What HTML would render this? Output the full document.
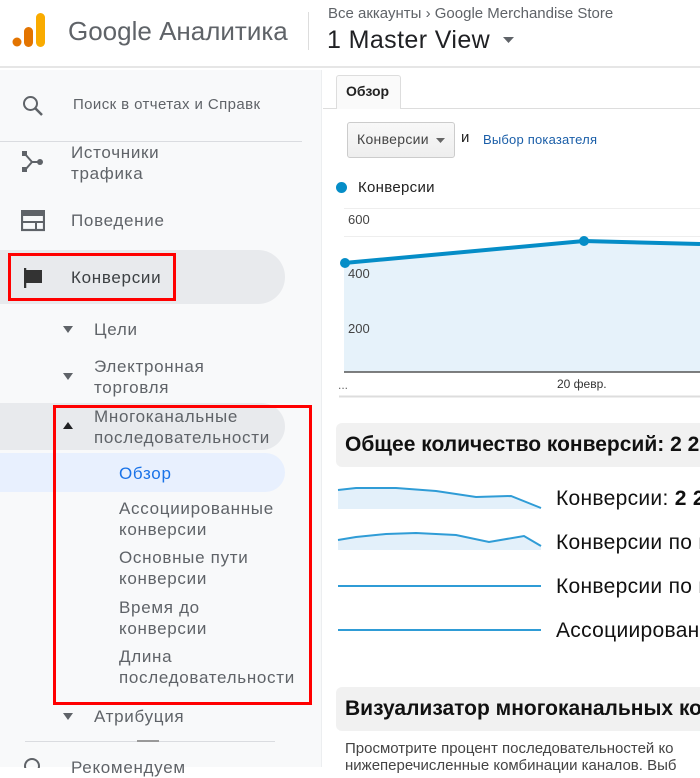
<!DOCTYPE html>
<html><head><meta charset="utf-8"><style>
*{margin:0;padding:0;box-sizing:border-box}
body{width:700px;height:767px;overflow:hidden;background:#fff;font-family:"Liberation Sans","DejaVu Sans",sans-serif;position:relative}
.a{position:absolute;white-space:nowrap}
.nav{font-size:17px;letter-spacing:0.7px;color:#5f6368;line-height:21px}
</style></head><body>
<!-- header -->
<div class="a" style="left:0;top:0;width:700px;height:68px;background:#fff;border-bottom:2px solid #e6e6e6"></div>
<svg class="a" style="left:10px;top:12px" width="36" height="38">
<circle cx="7" cy="30" r="4.5" fill="#e37400"/>
<rect x="14" y="15" width="9" height="20" rx="4.5" fill="#e37400"/>
<rect x="26" y="1" width="9" height="34" rx="4.5" fill="#f9ab00"/>
</svg>
<div class="a" style="left:68px;top:16px;font-size:26px;color:#5f6368">Google Аналитика</div>
<div class="a" style="left:308px;top:12px;width:1px;height:38px;background:#ddd"></div>
<div class="a" style="left:328px;top:5px;font-size:15px;color:#5f6368">Все аккаунты › Google Merchandise Store</div>
<div class="a" style="left:327px;top:26px;font-size:25px;letter-spacing:0.4px;color:#202124">1 Master View</div>
<svg class="a" style="left:503px;top:37px" width="12" height="7"><path d="M0 0H11L5.5 6Z" fill="#5f6368"/></svg>

<!-- sidebar -->
<div class="a" style="left:0;top:70px;width:322px;height:697px;background:#f8f9fa;border-right:1px solid #eceef0"></div>
<svg class="a" style="left:21px;top:94px" width="24" height="24"><circle cx="9.5" cy="9.5" r="6.5" fill="none" stroke="#5f6368" stroke-width="2"/><path d="M14.5 14.5L21 21" stroke="#5f6368" stroke-width="2.5"/></svg>
<div class="a" style="left:73px;top:96px;font-size:15px;letter-spacing:0.4px;color:#5f6368">Поиск в отчетах и Справк</div>
<div class="a" style="left:0;top:141px;width:302px;height:1px;background:#dadce0"></div>

<svg class="a" style="left:21px;top:150px" width="24" height="24"><rect x="1" y="1" width="5" height="5" fill="#5f6368"/><rect x="1" y="17" width="5" height="5" fill="#5f6368"/><circle cx="19" cy="12" r="3" fill="#5f6368"/><path d="M4 4L11 12L4 20M11 12H18" stroke="#5f6368" stroke-width="2" fill="none"/></svg>
<div class="a nav" style="left:71px;top:142px">Источники<br>трафика</div>

<svg class="a" style="left:21px;top:210px" width="24" height="22"><rect x="1" y="1" width="22" height="19" fill="none" stroke="#5f6368" stroke-width="2.2"/><rect x="1" y="1" width="22" height="5" fill="#5f6368"/><path d="M1 12H23M15 12V20" stroke="#5f6368" stroke-width="2"/></svg>
<div class="a nav" style="left:71px;top:210px">Поведение</div>

<div class="a" style="left:0;top:250px;width:285px;height:54px;background:#e8eaed;border-radius:0 27px 27px 0"></div>
<svg class="a" style="left:24px;top:268px" width="20" height="20"><path d="M1 0V20" stroke="#333" stroke-width="2.5"/><path d="M2 2H18V15H2Z" fill="#333"/></svg>
<div class="a nav" style="left:71px;top:267px;color:#3c4043">Конверсии</div>
<div class="a" style="left:8px;top:253px;width:168px;height:48px;border:3px solid #f00"></div>

<svg class="a" style="left:63px;top:326px" width="11" height="8"><path d="M0 0H10L5 7Z" fill="#5f6368"/></svg>
<div class="a nav" style="left:94px;top:319px">Цели</div>
<svg class="a" style="left:63px;top:373px" width="11" height="8"><path d="M0 0H10L5 7Z" fill="#5f6368"/></svg>
<div class="a nav" style="left:94px;top:356px">Электронная<br>торговля</div>

<div class="a" style="left:0;top:403px;width:285px;height:47px;background:#e8eaed;border-radius:0 24px 24px 0"></div>
<svg class="a" style="left:63px;top:422px" width="11" height="8"><path d="M0 7H10L5 0Z" fill="#202124"/></svg>
<div class="a nav" style="left:94px;top:406px">Многоканальные<br>последовательности</div>
<div class="a" style="left:0;top:453px;width:285px;height:39px;background:#e8f0fe;border-radius:0 20px 20px 0"></div>
<div class="a nav" style="left:119px;top:463px;color:#1a73e8">Обзор</div>
<div class="a nav" style="left:119px;top:498px">Ассоциированные<br>конверсии</div>
<div class="a nav" style="left:119px;top:547px">Основные пути<br>конверсии</div>
<div class="a nav" style="left:119px;top:597px">Время до<br>конверсии</div>
<div class="a nav" style="left:119px;top:646px">Длина<br>последовательности</div>
<div class="a" style="left:53px;top:405px;width:259px;height:300px;border:3px solid #f00"></div>
<svg class="a" style="left:63px;top:713px" width="11" height="8"><path d="M0 0H10L5 7Z" fill="#5f6368"/></svg>
<div class="a nav" style="left:94px;top:706px">Атрибуция</div>
<div class="a" style="left:25px;top:741px;width:250px;height:1px;background:#dadce0"></div>
<div class="a" style="left:137px;top:740px;width:22px;height:2px;background:#999"></div>
<svg class="a" style="left:22px;top:756px" width="22" height="12"><circle cx="10" cy="10" r="7" fill="none" stroke="#5f6368" stroke-width="2"/></svg>
<div class="a nav" style="left:71px;top:757px">Рекомендуем</div>

<!-- main -->
<div class="a" style="left:323px;top:108px;width:377px;height:1px;background:#ddd"></div>
<div class="a" style="left:336px;top:75px;width:65px;height:34px;background:#fafafa;border:1px solid #ddd;border-bottom:none;border-radius:3px 3px 0 0"></div>
<div class="a" style="left:346px;top:83px;font-size:14px;font-weight:bold;color:#222">Обзор</div>
<div class="a" style="left:347px;top:122px;width:108px;height:36px;border:1px solid #ccc;border-radius:3px;background:linear-gradient(#f8f8f8,#eee)"></div>
<div class="a" style="left:357px;top:131px;font-size:14px;letter-spacing:0.3px;color:#444">Конверсии</div>
<svg class="a" style="left:436px;top:138px" width="10" height="6"><path d="M0 0H9L4.5 5Z" fill="#666"/></svg>
<div class="a" style="left:461px;top:129px;font-size:15px;color:#222">и</div>
<div class="a" style="left:483px;top:132px;font-size:13px;letter-spacing:0.2px;color:#1a5ea8">Выбор показателя</div>
<div class="a" style="left:336px;top:182px;width:11px;height:11px;border-radius:50%;background:#058dc7"></div>
<div class="a" style="left:358px;top:179px;font-size:15px;letter-spacing:0.3px;color:#222">Конверсии</div>

<svg class="a" style="left:323px;top:200px" width="377" height="200">
<g stroke="#eee" stroke-width="1">
<path d="M21 8.5H377M21 36.5H377M21 63.5H377M21 90.5H377M21 118.5H377M21 145.5H377"/>
</g>
<path d="M21 63L261 41L377 44V172H21Z" fill="#e6f2fa"/>
<path d="M21 63L261 41L377 44" stroke="#058dc7" stroke-width="4" fill="none"/>
<circle cx="22" cy="63" r="5" fill="#058dc7"/><circle cx="261" cy="41" r="5" fill="#058dc7"/>
<path d="M21 172H377" stroke="#555" stroke-width="1.5"/>
<path d="M16 196.5H377" stroke="#ddd" stroke-width="2"/>
<text x="25" y="24" font-size="13" fill="#444" font-family="Liberation Sans">600</text>
<text x="25" y="78" font-size="13" fill="#444" font-family="Liberation Sans">400</text>
<text x="25" y="133" font-size="13" fill="#444" font-family="Liberation Sans">200</text>
<text x="15" y="189" font-size="12" fill="#666" font-family="Liberation Sans">...</text>
<text x="234" y="188" font-size="12" fill="#333" font-family="Liberation Sans">20 февр.</text>
</svg>

<div class="a" style="left:336px;top:423px;width:380px;height:44px;background:#f1f1f1;border-radius:6px"></div>
<div class="a" style="left:345px;top:433px;font-size:21px;font-weight:bold;color:#111">Общее количество конверсий: 2 2</div>

<svg class="a" style="left:336px;top:480px" width="210" height="170">
<path d="M2 10L20 8L60 8L100 11L140 17L175 16L205 28V29H2Z" fill="#e3f0fa"/>
<path d="M2 10L20 8L60 8L100 11L140 17L175 16L205 28" stroke="#2f9cd6" stroke-width="2" fill="none"/>
<path d="M2 60L20 57L50 54L80 53L120 55L153 62L188 56L205 66V70H2Z" fill="#e3f0fa"/>
<path d="M2 60L20 57L50 54L80 53L120 55L153 62L188 56L205 66" stroke="#2f9cd6" stroke-width="2" fill="none"/>
<path d="M2 106H205M2 150H205" stroke="#2f9cd6" stroke-width="2"/>
</svg>
<div class="a" style="left:556px;top:487px;font-size:21px;letter-spacing:0.3px;color:#111">Конверсии: <b>2 2</b></div>
<div class="a" style="left:556px;top:531px;font-size:21px;letter-spacing:0.3px;color:#111">Конверсии по в</div>
<div class="a" style="left:556px;top:575px;font-size:21px;letter-spacing:0.3px;color:#111">Конверсии по в</div>
<div class="a" style="left:556px;top:619px;font-size:21px;letter-spacing:0.3px;color:#111">Ассоциирован</div>

<div class="a" style="left:336px;top:687px;width:380px;height:44px;background:#f1f1f1;border-radius:6px"></div>
<div class="a" style="left:345px;top:697px;font-size:21px;font-weight:bold;color:#111">Визуализатор многоканальных ко</div>
<div class="a" style="left:345px;top:740px;font-size:15px;color:#444;line-height:17px">Просмотрите процент последовательностей ко<br>нижеперечисленные комбинации каналов. Выб</div>
</body></html>
